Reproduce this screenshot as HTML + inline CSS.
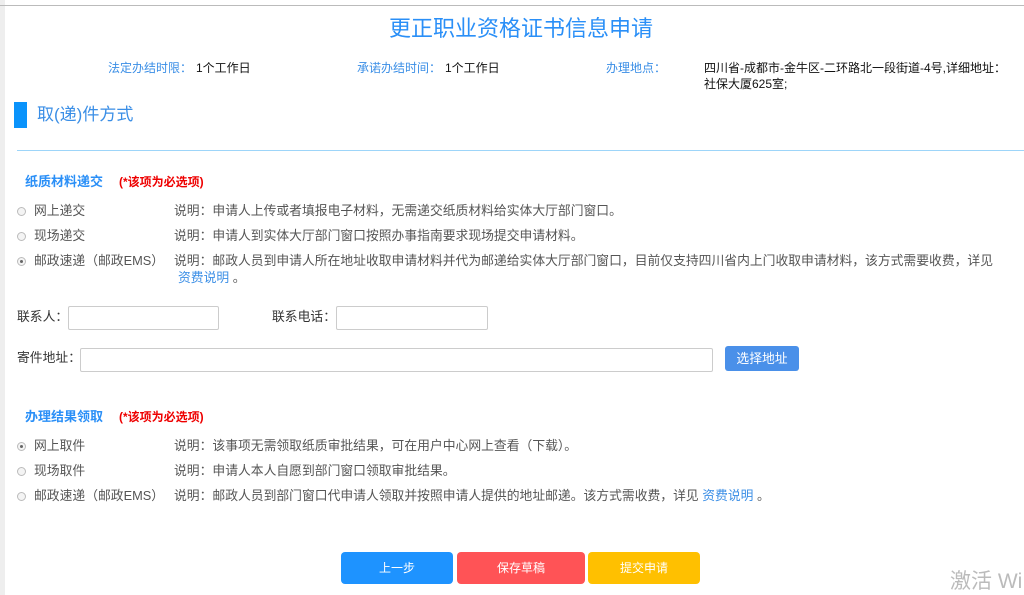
<!DOCTYPE html>
<html><head><meta charset="utf-8"><style>
*{margin:0;padding:0;box-sizing:border-box}
body{width:1024px;height:595px;background:#fff;position:relative;overflow:hidden;font-family:"Liberation Sans","Noto Sans CJK SC",sans-serif;font-size:12px;color:#333}
.a{position:absolute;white-space:nowrap;line-height:16px}
.lb{color:#3a8ee6}
.k{color:#111}
.g{color:#555;font-size:12.8px}
.r{position:absolute;width:9px;height:9px;border:1px solid #bbb;border-radius:50%;background:#f4f4f4}
.r.on::after{content:"";position:absolute;left:2px;top:2px;width:3px;height:3px;border-radius:50%;background:#666}
.in{position:absolute;border:1px solid #ccc;border-radius:2px;background:#fff}
.btn{position:absolute;color:#fff;border-radius:4px;text-align:center;font-size:12px}
.f{font-size:12.8px}
</style></head><body>
<div style="position:absolute;left:0;top:0;width:5px;height:595px;background:#eee"></div>
<div style="position:absolute;left:0;top:5px;width:1024px;height:1px;background:#bbb"></div>
<div class="a" style="left:0;width:1042px;text-align:center;top:15px;font-size:22px;line-height:28px;color:#2a8ff7">更正职业资格证书信息申请</div>
<div class="a lb" style="left:108px;top:60px">法定办结时限：</div>
<div class="a k" style="left:196px;top:60px">1个工作日</div>
<div class="a lb" style="left:357px;top:60px">承诺办结时间：</div>
<div class="a k" style="left:445px;top:60px">1个工作日</div>
<div class="a lb" style="left:606px;top:60px">办理地点：</div>
<div class="a k" style="left:704px;top:60px">四川省-成都市-金牛区-二环路北一段街道-4号,详细地址：</div>
<div class="a k" style="left:704px;top:76px">社保大厦625室;</div>
<div style="position:absolute;left:14px;top:102px;width:13px;height:26px;background:#0a93fb"></div>
<div class="a" style="left:37px;top:104px;font-size:17px;line-height:22px;color:#3a8ee6">取(递)件方式</div>
<div style="position:absolute;left:17px;top:150px;width:1007px;height:1px;background:#9dd5f9"></div>
<div class="a" style="left:25px;top:174px;font-size:13px;font-weight:bold;color:#2a8ff7">纸质材料递交</div>
<div class="a" style="left:119px;top:174px;font-size:12px;font-weight:bold;color:#e00">(*该项为必选项)</div>
<div class="r" style="left:17px;top:207px"></div><div class="a g" style="left:34px;top:203px">网上递交</div>
<div class="a g" style="left:174px;top:203px">说明：申请人上传或者填报电子材料，无需递交纸质材料给实体大厅部门窗口。</div>
<div class="r" style="left:17px;top:232px"></div><div class="a g" style="left:34px;top:228px">现场递交</div>
<div class="a g" style="left:174px;top:228px">说明：申请人到实体大厅部门窗口按照办事指南要求现场提交申请材料。</div>
<div class="r on" style="left:17px;top:257px"></div><div class="a g" style="left:34px;top:253px">邮政速递（邮政EMS）</div>
<div class="a g" style="left:174px;top:253px">说明：邮政人员到申请人所在地址收取申请材料并代为邮递给实体大厅部门窗口，目前仅支持四川省内上门收取申请材料，该方式需要收费，详见</div>
<div class="a g" style="left:178px;top:270px"><span style="color:#3a8ee6">资费说明</span> 。</div>
<div class="a f" style="left:17px;top:309px">联系人：</div>
<div class="in" style="left:68px;top:306px;width:151px;height:24px"></div>
<div class="a f" style="left:272px;top:309px">联系电话：</div>
<div class="in" style="left:336px;top:306px;width:152px;height:24px"></div>
<div class="a f" style="left:17px;top:350px">寄件地址：</div>
<div class="in" style="left:80px;top:348px;width:633px;height:24px"></div>
<div class="btn" style="left:725px;top:346px;width:74px;height:25px;line-height:25px;background:#4a90e9;border-radius:3px;font-size:12.8px">选择地址</div>
<div class="a" style="left:25px;top:409px;font-size:13px;font-weight:bold;color:#2a8ff7">办理结果领取</div>
<div class="a" style="left:119px;top:409px;font-size:12px;font-weight:bold;color:#e00">(*该项为必选项)</div>
<div class="r on" style="left:17px;top:442px"></div><div class="a g" style="left:34px;top:438px">网上取件</div>
<div class="a g" style="left:174px;top:438px">说明：该事项无需领取纸质审批结果，可在用户中心网上查看（下载）。</div>
<div class="r" style="left:17px;top:467px"></div><div class="a g" style="left:34px;top:463px">现场取件</div>
<div class="a g" style="left:174px;top:463px">说明：申请人本人自愿到部门窗口领取审批结果。</div>
<div class="r" style="left:17px;top:492px"></div><div class="a g" style="left:34px;top:488px">邮政速递（邮政EMS）</div>
<div class="a g" style="left:174px;top:488px">说明：邮政人员到部门窗口代申请人领取并按照申请人提供的地址邮递。该方式需收费，详见 <span style="color:#3a8ee6">资费说明</span> 。</div>
<div class="btn" style="left:341px;top:552px;width:112px;height:32px;line-height:32px;background:#1e93ff">上一步</div>
<div class="btn" style="left:457px;top:552px;width:128px;height:32px;line-height:32px;background:#ff5356">保存草稿</div>
<div class="btn" style="left:588px;top:552px;width:112px;height:32px;line-height:32px;background:#ffc000">提交申请</div>
<div class="a" style="left:950px;top:569px;font-size:21px;line-height:26px;color:#bbb">激活 Wi</div>
</body></html>
